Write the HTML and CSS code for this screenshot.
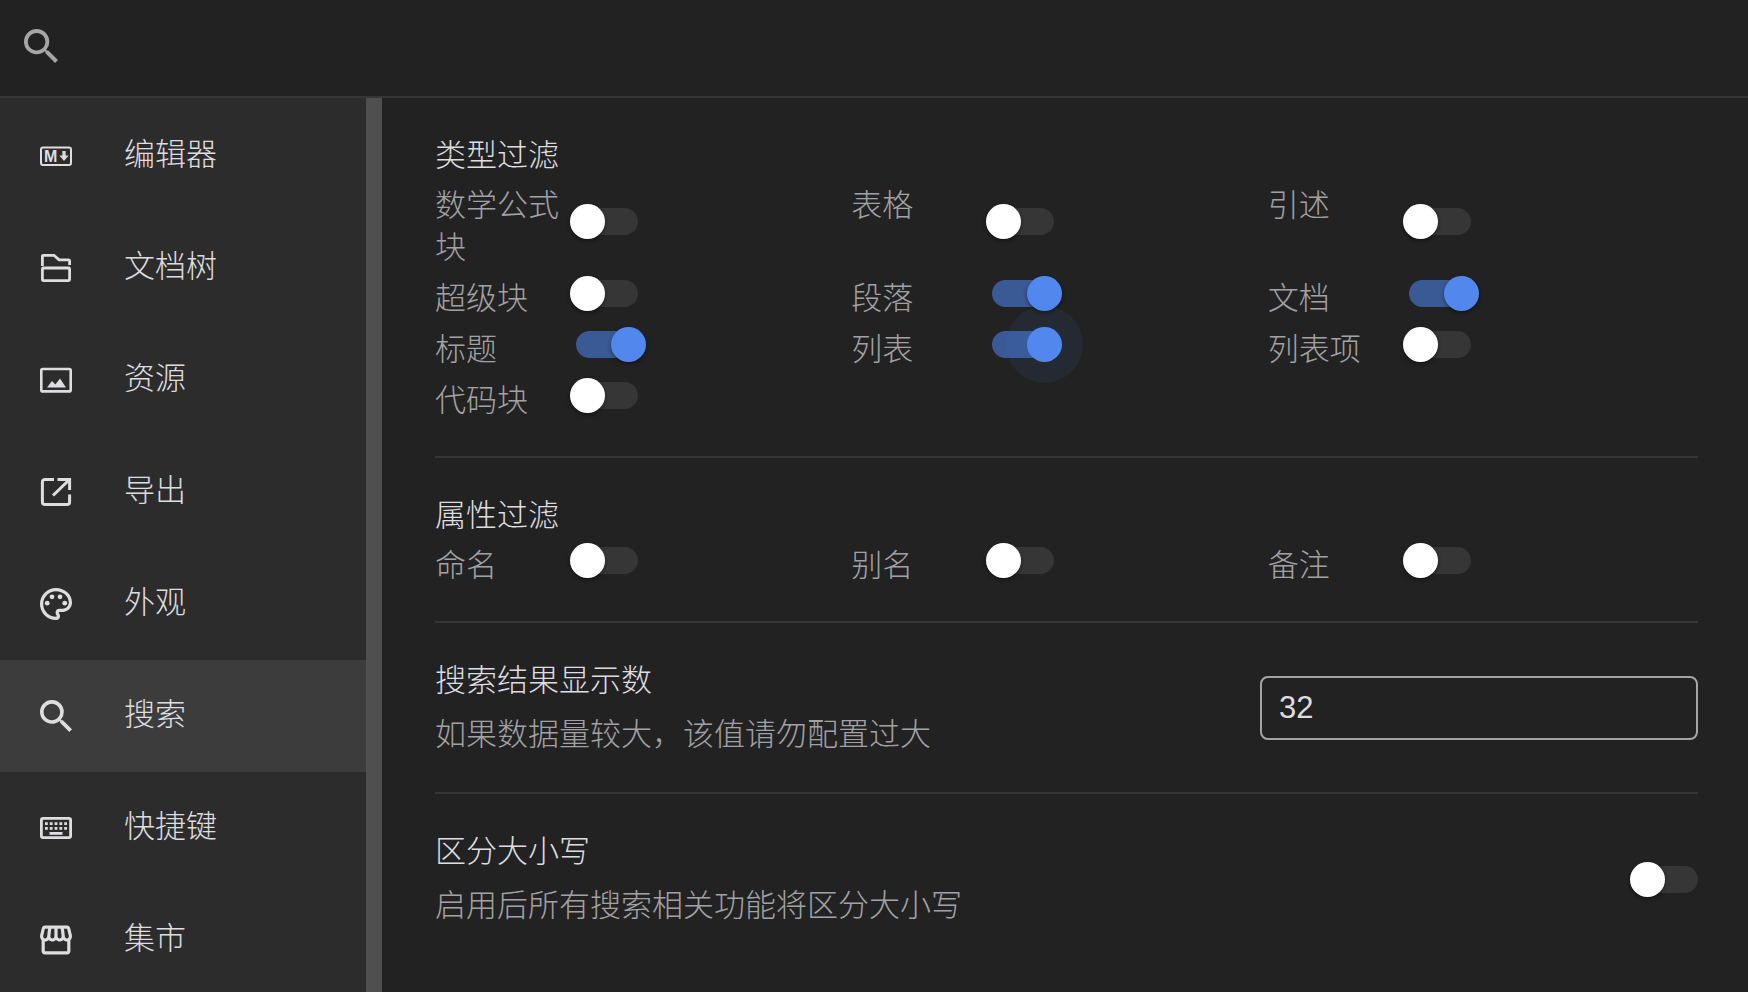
FILE: index.html
```html
<!DOCTYPE html>
<html lang="zh-CN">
<head>
    <meta charset="UTF-8">
    <meta name="viewport" content="width=device-width, initial-scale=1.0">
    <title>设置 - 搜索</title>
    <link rel="stylesheet" href="styles.css">
</head>
<body>
    <header class="search-bar">
        <label for="setting-search" class="search-icon">
            <svg viewBox="3 3 17.49 17.49" aria-label="搜索"><path d="M15.5 14h-.79l-.28-.27A6.471 6.471 0 0 0 16 9.5 6.5 6.5 0 1 0 9.5 16c1.61 0 3.09-.59 4.23-1.57l.27.28v.79l5 4.99L20.49 19l-4.99-5zm-6 0C7.01 14 5 11.99 5 9.5S7.01 5 9.5 5 14 7.01 14 9.5 11.99 14 9.5 14z"/></svg>
        </label>
        <input type="text" id="setting-search" class="search-input">
    </header>

    <div class="main">
        <nav class="sidebar">
            <button type="button" class="tab">
                <svg viewBox="0 0 32 32">
                    <rect class="line" x="1" y="7.5" width="30" height="17.5" rx="2" stroke-width="2"/>
                    <text class="md" x="4" y="21.5">M</text>
                    <path d="M22.4 11h3.2v4.6h3L24 21l-4.6-5.4h3z"/>
                </svg>
                <span>编辑器</span>
            </button>
            <button type="button" class="tab">
                <svg viewBox="0 0 32 32">
                    <path class="line" stroke-width="2.8" d="M2.4 14V4.3a1 1 0 0 1 1-1H14l5 4.6h9.6a1 1 0 0 1 1 1V13"/>
                    <rect class="line" stroke-width="2.8" x="2.4" y="16" width="27.2" height="12.6" rx="1"/>
                </svg>
                <span>文档树</span>
            </button>
            <button type="button" class="tab">
                <svg viewBox="0 0 32 32">
                    <rect class="line" stroke-width="2.6" x="1.3" y="5" width="29.4" height="22.4" rx="1.5"/>
                    <path d="M7 23.5l5-6.5 3.4 3.4 4.6-6 6 9.1z"/>
                </svg>
                <span>资源</span>
            </button>
            <button type="button" class="tab">
                <svg viewBox="0 0 32 32">
                    <path class="line" stroke-width="3" d="M14 3.4H5a2.6 2.6 0 0 0-2.6 2.6v20A2.6 2.6 0 0 0 5 28.6h22a2.6 2.6 0 0 0 2.6-2.6v-7.5M17.5 3.4h12.1V14M29 4L13 19.5"/>
                </svg>
                <span>导出</span>
            </button>
            <button type="button" class="tab">
                <svg viewBox="2 2 20 20">
                    <path d="M12 22C6.49 22 2 17.51 2 12S6.49 2 12 2s10 4.04 10 9c0 3.31-2.69 6-6 6h-1.77c-.28 0-.5.22-.5.5 0 .12.05.23.13.33.41.47.64 1.06.64 1.67A2.5 2.5 0 0 1 12 22zm0-18c-4.41 0-8 3.59-8 8s3.59 8 8 8c.28 0 .5-.22.5-.5a.54.54 0 0 0-.14-.35c-.41-.46-.63-1.05-.63-1.65a2.5 2.5 0 0 1 2.5-2.5H16c2.21 0 4-1.79 4-4 0-3.86-3.59-7-8-7z"/>
                    <circle cx="6.5" cy="11.5" r="1.5"/>
                    <circle cx="9.5" cy="7.5" r="1.5"/>
                    <circle cx="14.5" cy="7.5" r="1.5"/>
                    <circle cx="17.5" cy="11.5" r="1.5"/>
                </svg>
                <span>外观</span>
            </button>
            <button type="button" class="tab active">
                <svg viewBox="3 3 17.49 17.49"><path d="M15.5 14h-.79l-.28-.27A6.471 6.471 0 0 0 16 9.5 6.5 6.5 0 1 0 9.5 16c1.61 0 3.09-.59 4.23-1.57l.27.28v.79l5 4.99L20.49 19l-4.99-5zm-6 0C7.01 14 5 11.99 5 9.5S7.01 5 9.5 5 14 7.01 14 9.5 11.99 14 9.5 14z"/></svg>
                <span>搜索</span>
            </button>
            <button type="button" class="tab">
                <svg viewBox="0 0 32 32">
                    <rect class="line" stroke-width="2.8" x="1.4" y="6.4" width="29.2" height="19.2" rx="1.6"/>
                    <path class="line" stroke-width="2.8" stroke-dasharray="2.8 2" d="M5 11.6h22M5 16.4h22"/>
                    <path class="line" stroke-width="2.8" d="M9.5 21.4h13"/>
                </svg>
                <span>快捷键</span>
            </button>
            <button type="button" class="tab">
                <svg viewBox="2 2 20 20"><path d="M21.9 8.89l-1.05-4.37c-.22-.9-1-1.52-1.91-1.52H5.05c-.9 0-1.69.63-1.9 1.52L2.1 8.89c-.24 1.02-.02 2.06.62 2.88.08.11.19.19.28.29V19c0 1.1.9 2 2 2h14c1.1 0 2-.9 2-2v-6.94c.09-.09.2-.18.28-.28.64-.82.87-1.87.62-2.89zm-2.99-3.9l1.05 4.37c.1.42.01.84-.25 1.17-.14.18-.44.47-.94.47-.61 0-1.14-.49-1.21-1.14L16.98 5l1.93-.01zM13 5h1.96l.54 4.52c.05.39-.07.78-.33 1.07-.22.26-.54.41-.95.41-.67 0-1.22-.59-1.22-1.31V5zM8.49 9.52L9.04 5H11v4.69c0 .72-.55 1.31-1.29 1.31-.34 0-.65-.15-.89-.41-.25-.29-.37-.68-.33-1.07zm-4.45-.16L5.05 5h1.97l-.58 4.86c-.08.65-.6 1.14-1.21 1.14-.49 0-.8-.29-.93-.47-.27-.32-.36-.75-.26-1.17zM5 19v-6.03c.08.01.15.03.23.03.87 0 1.66-.36 2.24-.95.6.6 1.4.95 2.31.95.87 0 1.65-.36 2.23-.93.59.57 1.39.93 2.29.93.84 0 1.64-.35 2.24-.95.58.59 1.37.95 2.24.95.08 0 .15-.02.23-.03V19H5z"/></svg>
                <span>集市</span>
            </button>
        </nav>

        <main class="content">
            <section class="group">
                <h2>类型过滤</h2>
                <div class="grid">
                    <div class="option"><label for="mathBlock">数学公式块</label><input type="checkbox" class="switch" id="mathBlock"></div>
                    <div class="option"><label for="table">表格</label><input type="checkbox" class="switch" id="table"></div>
                    <div class="option"><label for="blockquote">引述</label><input type="checkbox" class="switch" id="blockquote"></div>
                    <div class="option"><label for="superBlock">超级块</label><input type="checkbox" class="switch" id="superBlock"></div>
                    <div class="option"><label for="paragraph">段落</label><input type="checkbox" class="switch" id="paragraph" checked></div>
                    <div class="option"><label for="document">文档</label><input type="checkbox" class="switch" id="document" checked></div>
                    <div class="option"><label for="heading">标题</label><input type="checkbox" class="switch" id="heading" checked></div>
                    <div class="option"><label for="list">列表</label><input type="checkbox" class="switch ripple" id="list" checked></div>
                    <div class="option"><label for="listItem">列表项</label><input type="checkbox" class="switch" id="listItem"></div>
                    <div class="option"><label for="codeBlock">代码块</label><input type="checkbox" class="switch" id="codeBlock"></div>
                </div>
            </section>

            <section class="group">
                <h2>属性过滤</h2>
                <div class="grid">
                    <div class="option"><label for="name">命名</label><input type="checkbox" class="switch" id="name"></div>
                    <div class="option"><label for="alias">别名</label><input type="checkbox" class="switch" id="alias"></div>
                    <div class="option"><label for="memo">备注</label><input type="checkbox" class="switch" id="memo"></div>
                </div>
            </section>

            <section class="row">
                <label for="limit" class="info">
                    <span class="title">搜索结果显示数</span>
                    <span class="desc">如果数据量较大，该值请勿配置过大</span>
                </label>
                <input type="number" class="text-field" id="limit" value="32">
            </section>

            <section class="row">
                <label for="caseSensitive" class="info">
                    <span class="title">区分大小写</span>
                    <span class="desc">启用后所有搜索相关功能将区分大小写</span>
                </label>
                <input type="checkbox" class="switch" id="caseSensitive">
            </section>
        </main>
    </div>
</body>
</html>
```
FILE: styles.css
```css
* {
    box-sizing: border-box;
}
body {
    margin: 0;
    height: 100vh;
    display: flex;
    flex-direction: column;
    overflow: hidden;
    background: #222222;
    color: #dedee0;
    font-family: "Liberation Sans", "Noto Sans CJK SC", sans-serif;
    font-size: 31px;
    font-weight: 300;
    line-height: 42px;
}
input, button {
    font: inherit;
    color: inherit;
}
svg {
    display: block;
    flex: none;
    width: 32px;
    height: 32px;
    fill: currentColor;
}
.line {
    fill: none;
    stroke: currentColor;
}
.md {
    font: bold 16px "Liberation Sans", sans-serif;
}

/* Top bar */
.search-bar {
    flex: none;
    display: flex;
    align-items: center;
    height: 98px;
    padding: 0 24px;
    gap: 16px;
    border-bottom: 2px solid #363636;
}
.search-icon {
    color: #a6a6a6;
    padding-bottom: 4px;
}
.search-icon svg {
    width: 34px;
    height: 34px;
}
.search-input {
    flex: 1;
    min-width: 0;
    background: transparent;
    border: none;
    outline: none;
}

.main {
    flex: 1;
    min-height: 0;
    display: flex;
}

/* Menu */
.sidebar {
    flex: none;
    width: 382px;
    display: flex;
    flex-direction: column;
    overflow-y: auto;
    scrollbar-width: none;
    padding-top: 2px;
    background: #2c2c2c;
    border-right: 16px solid #4f4f4f;
}
.tab {
    flex: none;
    display: flex;
    align-items: center;
    gap: 52px;
    height: 112px;
    padding: 0 40px;
    background: transparent;
    border: none;
    text-align: left;
    cursor: pointer;
}
.tab span {
    padding-bottom: 2px;
}
.tab.active {
    background: #3c3c3c;
}

/* Content */
.content {
    flex: 1;
    min-width: 0;
    overflow-y: auto;
    scrollbar-width: none;
    padding: 0 50px 0 53px;
}
.group {
    padding: 37px 0 34px;
    border-bottom: 2px solid #363636;
}
.group h2 {
    margin: 0 0 8px;
    font-size: 31px;
    font-weight: 300;
}
.grid {
    display: grid;
    grid-template-columns: repeat(3, 1fr);
    row-gap: 9px;
    padding-right: 14px;
}
.option {
    display: flex;
    gap: 16px;
}
.option label {
    width: 125px;
    color: #a2a2a6;
}
.option .switch {
    align-self: center;
    margin-bottom: 12px;
}
.row {
    display: flex;
    align-items: center;
    justify-content: space-between;
    gap: 32px;
    padding: 37px 0 36px;
    border-bottom: 2px solid #363636;
}
.row:last-child {
    border-bottom: none;
}
.info {
    display: flex;
    flex-direction: column;
    gap: 12px;
}
.desc {
    color: #a2a2a6;
}

.text-field {
    width: 438px;
    height: 64px;
    padding: 0 17px;
    background: transparent;
    border: 2px solid #a4a4a4;
    border-radius: 8px;
    outline: none;
    appearance: textfield;
    -moz-appearance: textfield;
}
.text-field::-webkit-inner-spin-button {
    appearance: none;
    margin: 0;
}

/* Switch */
.switch {
    appearance: none;
    position: relative;
    flex: none;
    width: 62px;
    height: 27px;
    margin: 0;
    border-radius: 14px;
    background: #363636;
    cursor: pointer;
}
.switch::after {
    content: "";
    position: absolute;
    top: -4px;
    left: -6px;
    width: 35px;
    height: 35px;
    border-radius: 50%;
    background: #ffffff;
    box-shadow: 0 2px 4px rgba(0, 0, 0, 0.4);
}
.switch:checked {
    background: #3a5a96;
}
.switch:checked::after {
    left: 35px;
    background: #5288ee;
}
.switch.ripple::after {
    box-shadow: 0 0 0 21px rgba(66, 133, 244, 0.08);
}
```
